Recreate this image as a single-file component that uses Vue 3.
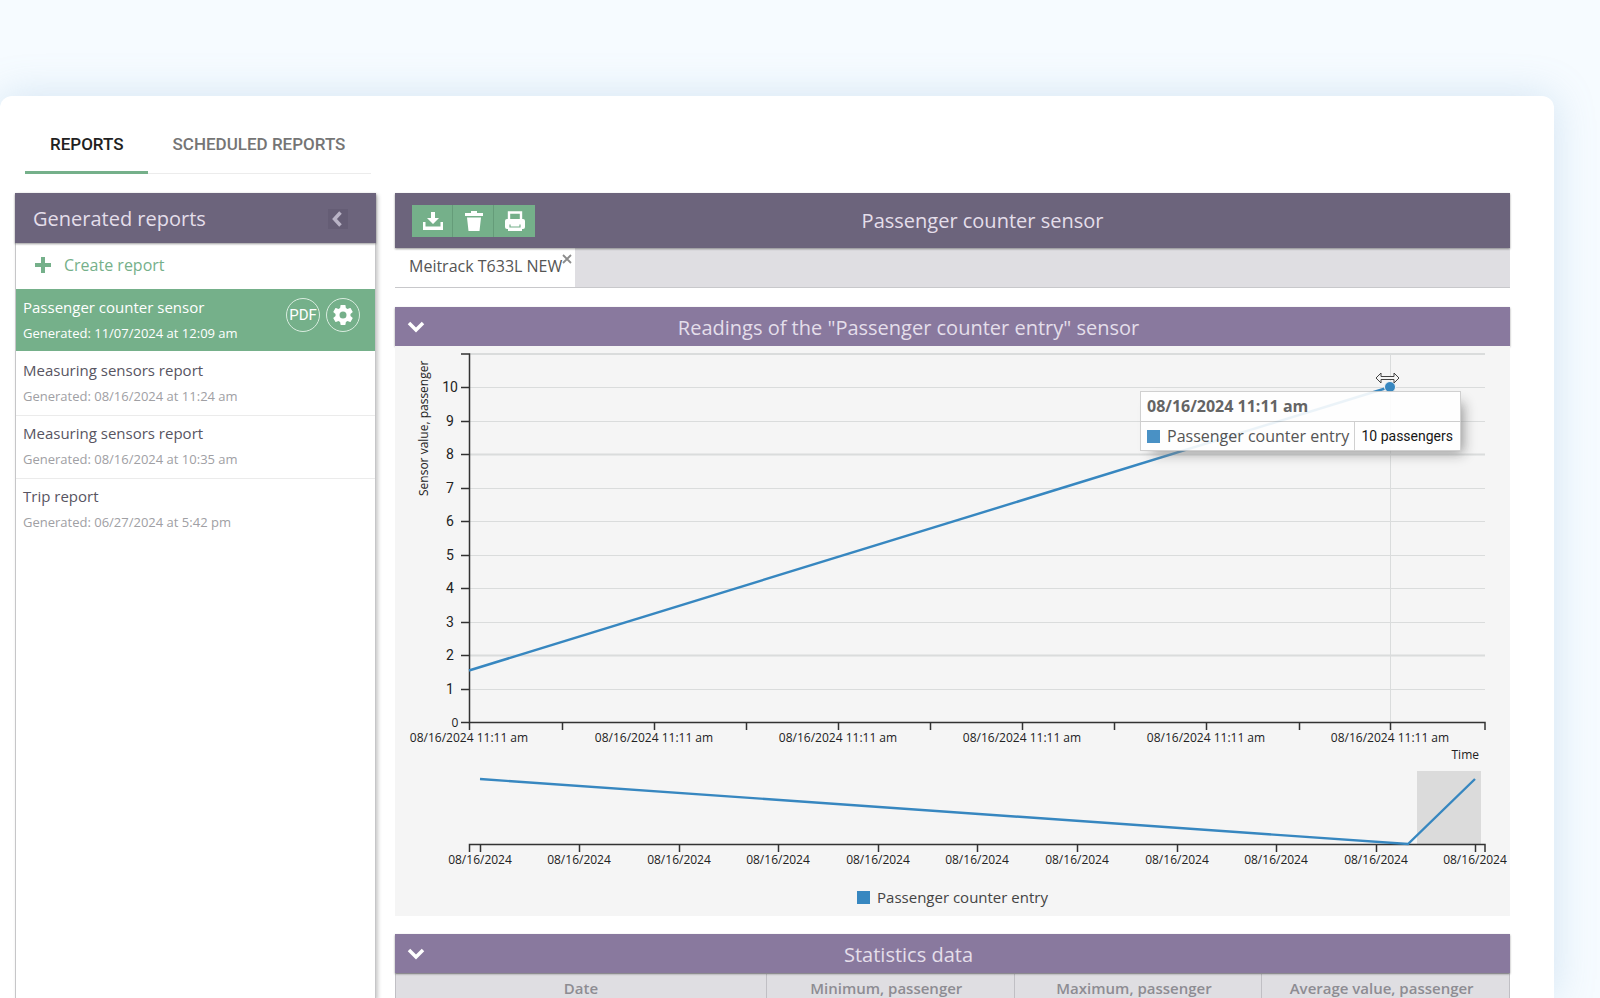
<script setup>
import { ref } from 'vue'

const reports = [
  { title: 'Passenger counter sensor', generated: '11/07/2024 at 12:09 am' },
  { title: 'Measuring sensors report', generated: '08/16/2024 at 11:24 am' },
  { title: 'Measuring sensors report', generated: '08/16/2024 at 10:35 am' },
  { title: 'Trip report', generated: '06/27/2024 at 5:42 pm' },
]
const active = ref(0)

const columns = ['Date', 'Minimum, passenger', 'Maximum, passenger', 'Average value, passenger']

// Chart geometry, in the units of the svg view box
const plot = { left: 74, right: 1090, top: 8, bottom: 376 }
const gridY = (value) => Math.round(plot.bottom - value * 33.5)
const yValues = [0, 1, 2, 3, 4, 5, 6, 7, 8, 9, 10]
const xTicks = [74, 167, 259, 351, 443, 535, 627, 719, 811, 904, 995]
const miniTicks = [85, 184, 284, 383, 483, 582, 682, 782, 881, 981, 1080]
</script>

<template>
  <div class="page">
    <div class="window">
      <nav class="tabs">
        <a href="#reports" class="tab current">REPORTS</a>
        <a href="#scheduled" class="tab">SCHEDULED REPORTS</a>
      </nav>

      <div class="body">
        <aside class="sidebar">
          <header class="side-head">
            <h2>Generated reports</h2>
            <button class="collapse" aria-label="Collapse">
              <svg width="20" height="20" viewBox="0 0 20 20"><path d="M12.500 3.500L6.500 10l6 6.500" fill="none" stroke="#b9b3c6" stroke-width="3.500" /></svg>
            </button>
          </header>
          <button class="create">
            <svg width="18" height="18" viewBox="0 0 18 18"><path d="M7 1h4v6h6v4h-6v6H7v-6H1V7h6z" fill="#75b08a" /></svg>
            <span>Create report</span>
          </button>
          <ul class="list">
            <li v-for="(r, i) in reports" :key="i" :class="['item', { active: i === active }]">
              <button class="entry" @click="active = i">
                <span class="title">{{ r.title }}</span>
                <span class="date">Generated: {{ r.generated }}</span>
              </button>
              <div v-if="i === active" class="actions">
                <button class="round">PDF</button>
                <button class="round" aria-label="Settings">
                  <svg width="24" height="24" viewBox="0 0 24 24"><path fill="#fff" d="M19.430 12.980c.04-.32.07-.64.07-.98s-.03-.66-.07-.98l2.110-1.650c.19-.15.24-.42.12-.64l-2-3.460c-.12-.22-.39-.3-.61-.22l-2.490 1c-.52-.4-1.080-.73-1.690-.98l-.38-2.650C14.460 2.180 14.250 2 14 2h-4c-.25 0-.46.18-.49.42l-.38 2.650c-.61.25-1.170.59-1.690.98l-2.490-1c-.23-.09-.49 0-.61.22l-2 3.460c-.13.22-.07.49.12.64l2.110 1.650c-.04.32-.07.65-.07.98s.03.66.07.98l-2.110 1.650c-.19.15-.24.42-.12.64l2 3.460c.12.22.39.3.61.22l2.490-1c.52.4 1.080.73 1.690.98l.38 2.650c.03.24.24.42.49.42h4c.25 0 .46-.18.49-.42l.38-2.650c.61-.25 1.170-.59 1.690-.98l2.490 1c.23.09.49 0 .61-.22l2-3.460c.12-.22.07-.49-.12-.64zM12 15.500a3.500 3.500 0 1 1 0-7 3.500 3.500 0 0 1 0 7z" /></svg>
                </button>
              </div>
            </li>
          </ul>
        </aside>

        <main class="content">
          <header class="main-head">
            <div class="tools">
              <button aria-label="Download">
                <svg width="22" height="20" viewBox="0 0 22 20"><path fill="#fff" d="M9 1h4v6h4l-6 6-6-6h4zM1 11h2.500v4.500h15V11H21v8H1z" /></svg>
              </button>
              <button aria-label="Delete">
                <svg width="20" height="20" viewBox="0 0 20 20"><path fill="#fff" d="M1 2h6V0h6v2h6v3H1zM3 6.500h14L15.500 20h-11z" /></svg>
              </button>
              <button aria-label="Print">
                <svg width="22" height="20" viewBox="0 0 22 20">
                  <path d="M5 8V1.500h12V8" fill="none" stroke="#fff" stroke-width="2.400" />
                  <rect x="1" y="8" width="20" height="10" rx="2" fill="#fff" />
                  <rect x="4" y="16" width="14" height="4" fill="#fff" />
                  <path d="M6 13.500v2.500h10v-2.500" fill="none" stroke="#75b08a" stroke-width="1.200" />
                </svg>
              </button>
            </div>
            <h1>Passenger counter sensor</h1>
          </header>

          <div class="trackers">
            <div class="tracker">
              <span>Meitrack T633L NEW</span>
              <button class="close" aria-label="Close">
                <svg width="10" height="10" viewBox="0 0 10 10"><path d="M1 1l8 8M9 1L1 9" stroke="#8c8c8c" stroke-width="1.800" /></svg>
              </button>
            </div>
          </div>

          <section class="section">
            <header class="section-head">
              <button class="toggle" aria-label="Toggle readings">
                <svg width="20" height="14" viewBox="0 0 20 14"><path d="M3 3l7 7 7-7" fill="none" stroke="#fff" stroke-width="3.500" /></svg>
              </button>
              <h2>Readings of the "Passenger counter entry" sensor</h2>
            </header>
            <div class="chart">
              <svg class="plot" viewBox="0 0 1115 536">
                <g stroke="#dadcdc">
                  <path :d="`M${plot.left} ${plot.top}H${plot.right}`" stroke-width="2" />
                  <path v-for="v in yValues.slice(1)" :key="v" :d="`M${plot.left} ${gridY(v)}.5H${plot.right}`" :stroke-width="v === 8 || v === 2 ? 2 : 1" />
                  <path d="M995.500 8V376" />
                </g>
                <g fill="none" stroke="#333" stroke-width="1.500">
                  <path d="M66 8H74.500V376.500H1090V384" />
                  <path v-for="v in yValues" :key="v" :d="`M66 ${gridY(v)}.5H74`" />
                  <path v-for="x in xTicks" :key="x" :d="`M${x}.5 376V384`" />
                </g>
                <g class="num" text-anchor="middle">
                  <text v-for="v in yValues" :key="v" :x="v === 0 ? 60 : 55" :y="gridY(v) + 5" :class="{ zero: v === 0 }">{{ v }}</text>
                </g>
                <text class="small" transform="translate(33 150) rotate(-90)">Sensor value, passenger</text>
                <g class="small" text-anchor="middle">
                  <template v-for="(x, i) in xTicks" :key="x">
                    <text v-if="i % 2 === 0" :x="x" y="396">08/16/2024 11:11 am</text>
                  </template>
                </g>
                <text class="small" x="1084" y="413" text-anchor="end">Time</text>
                <path d="M74 324.500L995 41" fill="none" stroke="#3787c0" stroke-width="2.400" />
                <circle cx="995" cy="41" r="5.500" fill="#3787c0" stroke="#f5f5f5" stroke-width="1" />
                <path fill="#f5f5f5" stroke="#444" stroke-width="1" d="M981 32l5-5v3.500h13V27l5 5-5 5v-3.500h-13V37z" />

                <rect x="1022" y="425" width="64" height="73" fill="#dbdbdb" />
                <path d="M74.500 506V498.500H1090V506" fill="none" stroke="#333" stroke-width="1.500" />
                <path v-for="x in miniTicks" :key="x" :d="`M${x}.5 498V506`" stroke="#333" stroke-width="1.500" />
                <path d="M85 433L1013 498L1080 433" fill="none" stroke="#3787c0" stroke-width="2.400" />
                <g class="small" text-anchor="middle">
                  <text v-for="x in miniTicks" :key="x" :x="x" y="518">08/16/2024</text>
                </g>
              </svg>
              <div class="legend"><i class="swatch"></i>Passenger counter entry</div>

              <div class="tooltip">
                <div class="tip-title">08/16/2024 11:11 am</div>
                <div class="tip-row">
                  <span class="tip-name"><i class="swatch"></i>Passenger counter entry</span>
                  <span class="tip-value">10 passengers</span>
                </div>
              </div>
            </div>
          </section>

          <section class="section">
            <header class="section-head">
              <button class="toggle" aria-label="Toggle statistics">
                <svg width="20" height="14" viewBox="0 0 20 14"><path d="M3 3l7 7 7-7" fill="none" stroke="#fff" stroke-width="3.500" /></svg>
              </button>
              <h2>Statistics data</h2>
            </header>
            <table class="stats">
              <thead>
                <tr><th v-for="c in columns" :key="c" scope="col">{{ c }}</th></tr>
              </thead>
            </table>
          </section>
        </main>
      </div>
    </div>
  </div>
</template>

<style>
body {
  margin: 0;
  background: #f6fbff;
}
</style>

<style scoped>
* {
  box-sizing: border-box;
}
.page {
  height: 100vh;
  overflow: hidden;
  display: flex;
  padding: 96px 46px 0 0;
  font-family: "Open Sans", "Noto Sans", sans-serif;
}
h1,
h2 {
  margin: 0;
  font-size: 20px;
  line-height: 28px;
  font-weight: 400;
  color: #e4deea;
}
button {
  border: 0;
  padding: 0;
  background: none;
  font: inherit;
  color: inherit;
  cursor: pointer;
}
svg {
  display: block;
}
.window {
  flex: 1;
  min-width: 0;
  display: flex;
  flex-direction: column;
  padding: 0 44px 0 15px;
  background: #fff;
  border-radius: 12px 12px 0 0;
  box-shadow: 0 0 40px rgba(120, 170, 210, 0.28);
}
.tabs {
  display: flex;
  width: 346px;
  margin: 18px 0 19px 10px;
  border-bottom: 1px solid #ececec;
  font: 500 17px/20px Roboto, sans-serif;
}
.tab {
  height: 60px;
  margin-bottom: -1px;
  padding: 20px 24px 0 25px;
  text-decoration: none;
  white-space: nowrap;
  color: #757575;
}
.tab.current {
  color: #212121;
  border-bottom: 3px solid #75b08a;
}
.body {
  flex: 1;
  min-height: 0;
  display: flex;
  gap: 19px;
}
.sidebar {
  flex: 0 0 361px;
  border: 1px solid #c6c6c8;
  border-width: 0 1px;
  box-shadow: 2px 2px 4px rgba(0, 0, 0, 0.22);
}
.side-head {
  display: flex;
  align-items: center;
  justify-content: space-between;
  height: 50px;
  margin: 0 -1px;
  padding: 2px 28px 0 18px;
  background: #6c647c;
  box-shadow: 0 1px 2px rgba(0, 0, 0, 0.4);
}
.collapse {
  background: #655d75;
}
.create {
  display: flex;
  align-items: center;
  gap: 12px;
  width: 100%;
  height: 46px;
  padding: 0 18px 2px;
  font-size: 16px;
  color: #75b08a;
}
.list {
  margin: 0;
  padding: 0;
  list-style: none;
}
.item {
  display: flex;
  justify-content: space-between;
  height: 63px;
  padding: 6px 15px 0 7px;
  border-bottom: 1px solid #ebebeb;
}
.item:last-child {
  border-bottom: 0;
}
.item.active {
  height: 62px;
  margin-bottom: 2px;
  padding-top: 7px;
  background: #75b08a;
  border-color: #75b08a;
}
.entry {
  display: flex;
  flex-direction: column;
  gap: 6px;
  text-align: left;
}
.title {
  font-size: 15px;
  line-height: 22px;
  color: #585562;
}
.date {
  font-size: 13px;
  line-height: 18px;
  color: #a0a0a4;
}
.active .title,
.active .date {
  color: #fff;
}
.actions {
  display: flex;
  gap: 6px;
}
.round {
  display: flex;
  align-items: center;
  justify-content: center;
  width: 34px;
  height: 34px;
  margin-top: 2px;
  border: 1px solid #d9ecdf;
  border-radius: 50%;
  font: 400 15px/16px Roboto, sans-serif;
  color: #fff;
}
.content {
  flex: 1;
  min-width: 0;
}
.main-head {
  display: grid;
  grid-template-columns: 1fr auto 1fr;
  align-items: center;
  height: 55px;
  background: #6c647c;
  position: relative;
  box-shadow: 0 1px 2px rgba(0, 0, 0, 0.4);
}
.main-head h1 {
  grid-column: 2;
  padding-left: 60px;
}
.tools {
  display: flex;
  padding-left: 17px;
}
.tools button {
  display: flex;
  align-items: center;
  justify-content: center;
  width: 41px;
  height: 32px;
  background: #75b08a;
}
.tools button + button {
  box-shadow: -1px 0 0 #659c79;
}
.trackers {
  display: flex;
  height: 40px;
  margin-bottom: 19px;
  background: #dfdee2;
  border-bottom: 1px solid #c8c8cb;
}
.tracker {
  display: flex;
  width: 180px;
  padding: 6px 4px 0 14px;
  background: #fff;
  font-size: 16px;
  line-height: 24px;
  color: #555;
  white-space: nowrap;
}
.close {
  align-self: flex-start;
}
.section {
  margin-bottom: 18px;
}
.section-head {
  display: grid;
  grid-template-columns: 1fr auto 1fr;
  align-items: center;
  height: 39px;
  padding: 0 99px 0 11px;
  background: #89799e;
  position: relative;
  box-shadow: 0 1px 2px rgba(0, 0, 0, 0.4);
}
.section-head h2 {
  padding-top: 2px;
}
.toggle {
  justify-self: start;
}
.chart {
  position: relative;
  padding-bottom: 4px;
  background: #f5f5f5;
}
.plot {
  width: 100%;
  height: auto;
}
.small {
  font-size: 12px;
  fill: #222;
}
.num {
  font: 14px Roboto, sans-serif;
  fill: #222;
}
.zero {
  font: 12px "Open Sans", sans-serif;
}
.legend {
  display: flex;
  align-items: center;
  justify-content: center;
  gap: 7px;
  height: 30px;
  font-size: 15px;
  line-height: 20px;
  color: #444;
}
.swatch {
  width: 13px;
  height: 13px;
  background: #3787c0;
}
.tooltip {
  position: absolute;
  top: 45px;
  right: 49px;
  width: 321px;
  border: 1px solid #ccc;
  background: #fff;
  opacity: 0.9;
  box-shadow: 7px 7px 12px -5px #888;
  white-space: nowrap;
}
.tip-title {
  padding: 2px 6px 3px;
  font-size: 16px;
  line-height: 24px;
  font-weight: 700;
  color: #555;
}
.tip-row {
  display: flex;
  border-top: 1px solid #ccc;
  line-height: 28px;
}
.tip-name {
  flex: 1;
  display: flex;
  align-items: center;
  gap: 7px;
  padding-left: 6px;
  font-size: 16px;
  color: #444;
}
.tip-value {
  padding: 0 7px 0 6px;
  border-left: 1px solid #ccc;
  font: 14px/28px Roboto, sans-serif;
  color: #000;
}
.stats {
  width: 100%;
  border-collapse: collapse;
  table-layout: fixed;
  background: #dfdee2;
}
.stats th {
  height: 28px;
  padding: 0 8px 0 0;
  border: 1px solid #c0bfc4;
  font-size: 15px;
  font-weight: 600;
  color: #8d8c92;
}
.stats th:first-child {
  width: 33.300%;
  padding: 0;
}
</style>
